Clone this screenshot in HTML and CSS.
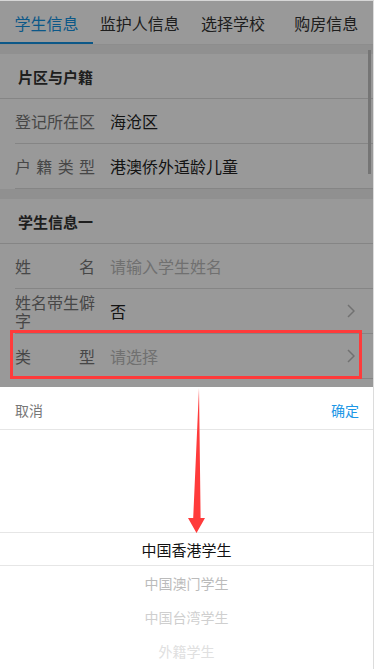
FILE: index.html
```html
<!DOCTYPE html>
<html lang="zh-CN">
<head>
<meta charset="utf-8">
<title>学生信息</title>
<link rel="stylesheet" href="styles.css">
</head>
<body>
<div class="app">
  <div class="page">
    <nav class="tabs">
      <div class="tab active">学生信息</div>
      <div class="tab">监护人信息</div>
      <div class="tab">选择学校</div>
      <div class="tab">购房信息</div>
    </nav>

    <section class="section">
      <div class="section-title">片区与户籍</div>
      <div class="row">
        <div class="label">登记所在区</div>
        <div class="value">海沧区</div>
      </div>
      <div class="row">
        <div class="label justify">户籍类型</div>
        <div class="value">港澳侨外适龄儿童</div>
      </div>
    </section>

    <section class="section">
      <div class="section-title">学生信息一</div>
      <div class="row">
        <div class="label justify">姓名</div>
        <div class="value placeholder">请输入学生姓名</div>
      </div>
      <div class="row">
        <div class="label multi">姓名带生僻字</div>
        <div class="value">否</div>
        <svg class="chev" viewBox="0 0 8 14" width="8" height="14"><polyline points="1,1 7,7 1,13" fill="none" stroke="#bdbdbd" stroke-width="1.5"/></svg>
      </div>
      <div class="row">
        <div class="label justify">类型</div>
        <div class="value placeholder">请选择</div>
        <svg class="chev" viewBox="0 0 8 14" width="8" height="14"><polyline points="1,1 7,7 1,13" fill="none" stroke="#bdbdbd" stroke-width="1.5"/></svg>
      </div>
      <div class="row"></div>
    </section>
    <div class="scrollbar"></div>
  </div>

  <div class="mask"></div>

  <div class="picker">
    <div class="picker-head">
      <span class="cancel">取消</span>
      <span class="ok">确定</span>
    </div>
    <div class="wheel">
      <div class="option selected">中国香港学生</div>
      <div class="option o1">中国澳门学生</div>
      <div class="option o2">中国台湾学生</div>
      <div class="option o3">外籍学生</div>
    </div>
  </div>

  <div class="highlight"></div>
  <svg class="arrow" width="376" height="669" viewBox="0 0 376 669">
    <polygon points="199,388 200.6,518 205,518 196.5,533 188,518 193.2,518" fill="#ff3b3b"/>
  </svg>
</div>
</body>
</html>
```
FILE: styles.css
```css
* { box-sizing: border-box; }
html, body { margin: 0; padding: 0; background: #fff; }
body {
  font-family: "Noto Sans CJK SC", "Noto Sans", sans-serif;
  color: #222;
}
.app {
  position: relative;
  width: 374px;
  height: 669px;
  border-top: 1px solid #d6d6d6;
  border-right: 1px solid #dcdcdc;
  overflow: hidden;
}
.page {
  position: relative;
  background: #f0f0f0;
  height: 100%;
}
.tabs {
  display: flex;
  height: 44px;
  background: #fff;
  border-bottom: 1px solid #ececec;
}
.tab {
  flex: 1;
  display: flex;
  align-items: center;
  justify-content: center;
  font-size: 16px;
  color: #333;
  padding-top: 2px;
  border-bottom: 2px solid transparent;
}
.tab.active {
  color: #1493e3;
  border-bottom-color: #1493e3;
}
.section {
  background: #fff;
  margin-top: 9px;
}
.section + .section { margin-top: 10px; }
.section-title {
  height: 45px;
  display: flex;
  align-items: center;
  padding-left: 18px;
  font-size: 15px;
  font-weight: bold;
  color: #333;
  border-bottom: 1px solid #dedede;
}
.row {
  display: flex;
  align-items: center;
  height: 45px;
  margin-left: 15px;
  padding-right: 18px;
  border-bottom: 1px solid #dedede;
}
.label {
  width: 80px;
  flex: none;
  font-size: 16px;
  line-height: 18px;
  color: #777;
}
.label.justify {
  text-align: justify;
  text-align-last: justify;
}
.value {
  flex: 1;
  margin-left: 15px;
  font-size: 16px;
  color: #222;
}
.value.placeholder { color: #bbb; }
.chev { flex: none; }
.scrollbar {
  position: absolute;
  top: 49px;
  right: 2px;
  width: 3px;
  height: 124px;
  background: #c4c4c4;
}
.mask {
  position: absolute;
  inset: 0;
  background: rgba(0, 0, 0, 0.4);
}
.picker {
  position: absolute;
  left: 0;
  right: 0;
  bottom: 0;
  height: 282px;
  background: #fff;
}
.picker-head {
  height: 43px;
  display: flex;
  align-items: center;
  justify-content: space-between;
  padding: 3px 14px 0 15px;
  font-size: 14px;
  border-bottom: 1px solid #e6e6e6;
}
.cancel { color: #777; }
.ok { color: #1c97e6; }
.wheel {
  padding-top: 102px;
}
.option {
  height: 34px;
  display: flex;
  align-items: center;
  justify-content: center;
  font-size: 14px;
}
.option.selected {
  font-size: 15px;
  color: #111;
  border-top: 1px solid #e6e6e6;
  border-bottom: 1px solid #e6e6e6;
}
.option.o1 { color: #bbb; }
.option.o2 { color: #cfcfcf; }
.option.o3 { color: #e0e0e0; }
.highlight {
  position: absolute;
  left: 10px;
  top: 329px;
  width: 352px;
  height: 49px;
  border: 3px solid #ff3b3b;
}
.arrow {
  position: absolute;
  left: 0;
  top: -1px;
}
```
